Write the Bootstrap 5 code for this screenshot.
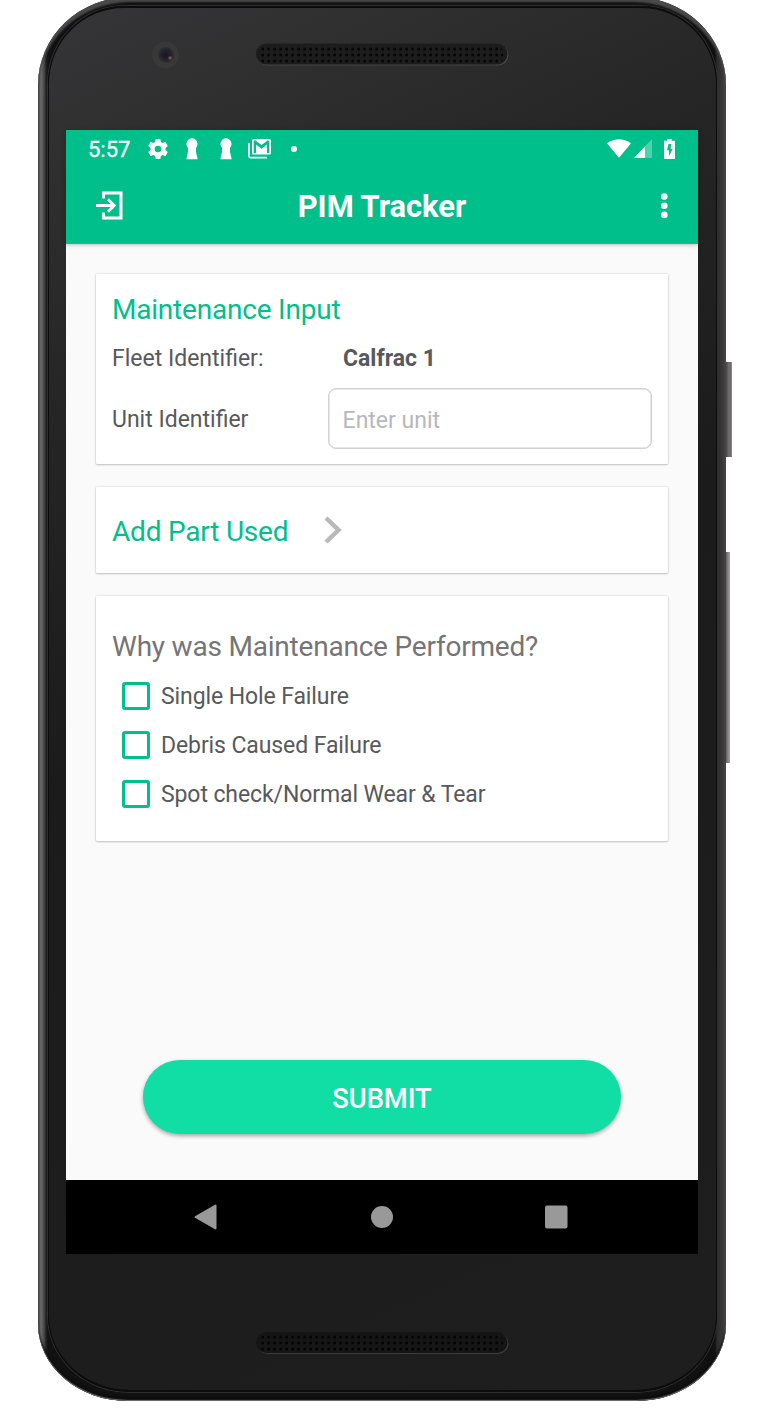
<!DOCTYPE html>
<html lang="en">
<head>
<meta charset="utf-8">
<meta name="viewport" content="width=device-width, initial-scale=1">
<title>PIM Tracker</title>
<link rel="stylesheet" href="https://cdn.jsdelivr.net/npm/bootstrap@5.3.0/dist/css/bootstrap.min.css">
<style>
  body { font-family: Roboto, "Liberation Sans", sans-serif; background: #fff; overflow: hidden; }
  svg { display: block; flex: none; }
  .stage { height: 1424px; display: flow-root; }
  .phone {
    width: 688px; height: 1404px; margin: -3px 0 0 38px; padding: 9px 9px 9px 10px;
    border-radius: 92px 92px 90px 90px / 88px 88px 77px 77px;
    background: linear-gradient(to right, #4d4c4d 0, #6b6a6b 3px, #4a494a 6px, #242324 8px, #121112 10px, #121112 677px, #2b292a 679px, #353233 682px, #3b3839 685px, #555253 688px);
    box-shadow: inset 0 5px 2px #4b4a4b, inset 0 -1px 1px #777, inset 0 -4px 2px #0d0d0d;
  }
  .face {
    height: 1386px; padding: 0 19px 0 18px; border: 2px solid #0c0c0c; border-width: 2px 1px;
    border-radius: 76px 76px 82px 82px / 78px 78px 76px 76px;
    background: linear-gradient(155deg, #353537 0, #303031 130px, #262626 340px, #1b1b1b 700px, #1e1e1e 100%);
    box-shadow: 0 0 0 1px #303031;
  }
  .chin-top { height: 122px; }
  .chin-bottom { height: 138px; padding-top: 77px; }
  .screen { width: 632px; height: 1124px; background: #fafafa; margin-left: -1px; }
  .side-key { left: 726px; background: linear-gradient(to right, #474647, #727272 3px, #666 5px, #aaa); }
  .key-power { top: 362px; width: 6px; height: 95px; }
  .key-volume { top: 552px; width: 4px; height: 211px; background: linear-gradient(to right, #5a595a, #8a8a8a 2px, #999); }
  .top-green { height: 114px; background: #00bf8b; color: #fff; box-shadow: 0 1px 4px rgba(0,0,0,.25); border-bottom: 1px solid #24b48c; }
  .status { height: 38px; padding: 0 23px 0 22px; }
  .clock { font-size: 22px; width: 60px; line-height: 38px; padding-top: 2px; font-weight: 400; -webkit-text-stroke: .3px #fff; }
  .title-bar { height: 75px; padding: 0 29px 0 30px; }
  .title-text { font-size: 30.9px; font-weight: 700; line-height: 75px; padding-top: 2px; margin-right: 20px; }
  .content { height: 936px; padding: 30px 30px 0; }
  .panel { border: 0; border-radius: 1px; background: #fff; box-shadow: 0 0 2px rgba(0,0,0,.22), 0 1px 2px rgba(0,0,0,.18); color: #58595b; font-size: 23px; padding: 0 16px; }
  .panel-input { height: 190px; margin-bottom: 23px; }
  .panel-part { height: 86px; margin-bottom: 23px; }
  .panel-why { height: 245px; padding-top: 32px; }
  .heading { font-size: 28px; letter-spacing: -.21px; line-height: 38px; margin: 0; font-weight: 400; }
  .heading-green { color: #00bf8b; }
  .heading-gray { color: #757575; }
  .label-col { width: 231px; }
  .fleet-row { height: 34px; line-height: 34px; margin-top: 13px; }
  .unit-row { height: 61px; margin-top: 12px; }
  .unit-row label, .check-line label { line-height: 34px; padding-top: 2px; }
  .check-line label { letter-spacing: -.1px; }
  .unit-field { height: 61px; width: 325px; margin-left: -15px; border: 1.5px solid #d1d1d1; box-shadow: inset 0 0 0 .5px #d1d1d1; border-radius: 8px; font-size: 23px; padding: 3px 14px 0; }
  .unit-field::placeholder { color: #b7b7bd; opacity: 1; }
  .check-line { height: 49px; padding-left: 10px; }
  .check-line .form-check-input { width: 28px; height: 28px; margin: 0 11px 0 0; border: 3px solid #00bf8b; border-radius: 3px; background: #fff; flex: none; }
  .submit { width: 478px; height: 74px; margin: 219px auto 0; background: #10dea5; color: #fff; font-size: 27.3px; font-weight: 500; border: 0; border-radius: 37px; padding: 4px 0 0; box-shadow: 0 2px 4px rgba(0,0,0,.35); }
  .nav-keys { height: 74px; background: #000; }
</style>
</head>
<body>
<div class="stage position-relative">
  <div class="phone">
    <div class="face">
      <div class="chin-top position-relative">
        <svg width="630" height="122" viewBox="67 8 630 122">
          <defs>
            <pattern id="holes" x="259" y="46" width="6" height="6" patternUnits="userSpaceOnUse"><circle cx="3.6" cy="3" r="1.5" fill="#050505"/></pattern>
            <radialGradient id="lens"><stop offset="0" stop-color="#17171d"/><stop offset=".6" stop-color="#23222a"/><stop offset="1" stop-color="#303033"/></radialGradient>
          </defs>
          <circle cx="165.500" cy="55" r="13.500" fill="#383839"/>
          <circle cx="166" cy="55" r="8" fill="url(#lens)"/>
          <circle cx="170" cy="58" r="1.700" fill="#75515a"/>
          <rect x="257" y="44.500" width="251.500" height="21" rx="10.500" fill="#454545"/>
          <rect x="256" y="43.500" width="251.500" height="21" rx="10.500" fill="#1c1c1c"/>
          <rect x="260" y="46" width="243" height="18" rx="6" fill="url(#holes)"/>
        </svg>
      </div>

      <div class="screen d-flex flex-column">
        <header class="top-green position-relative flex-shrink-0">
          <div class="status d-flex align-items-center">
            <span class="clock">5:57</span>
            <svg width="20" height="20" viewBox="2 2 20 20" fill="#fff"><path fill-rule="evenodd" d="M19.430 12.980c.04-.32.07-.64.07-.98s-.03-.66-.07-.98l2.110-1.650c.19-.15.240-.42.120-.64l-2-3.460c-.12-.22-.39-.3-.61-.22l-2.490 1c-.52-.4-1.080-.73-1.690-.98l-.38-2.650C14.460 2.180 14.250 2 14 2h-4c-.25 0-.46.180-.49.420l-.38 2.650c-.61.250-1.170.59-1.690.98l-2.490-1c-.23-.09-.49 0-.61.220l-2 3.460c-.13.220-.07.490.120.640l2.110 1.650c-.04.320-.07.650-.07.980s.03.660.07.980l-2.110 1.650c-.19.150-.24.420-.12.640l2 3.460c.12.220.39.300.61.220l2.490-1c.52.400 1.080.730 1.690.980l.38 2.650c.03.240.24.420.49.420h4c.25 0 .46-.18.490-.42l.38-2.650c.61-.25 1.170-.59 1.690-.98l2.490 1c.23.090.49 0 .61-.22l2-3.460c.12-.22.070-.49-.12-.64l-2.110-1.650zM12 15.300a3.300 3.300 0 1 1 0-6.600 3.300 3.300 0 0 1 0 6.600z"/></svg>
            <svg style="margin-left:17px" width="14" height="22" viewBox="0 0 14 22" fill="#fff"><path d="M7 0.300a5.700 5.700 0 0 1 4 9.500V14l1.700 7.300h-11.400l1.700-7.300v-4.200A5.700 5.700 0 0 1 7 .3z"/></svg>
            <svg style="margin-left:20px" width="14" height="22" viewBox="0 0 14 22" fill="#fff"><path d="M7 0.300a5.700 5.700 0 0 1 4 9.500V14l1.700 7.300h-11.400l1.700-7.300v-4.200A5.700 5.700 0 0 1 7 .3z"/></svg>
            <svg style="margin-left:15px" width="24" height="20" viewBox="0 0 24 20"><path d="M.9 4V17Q.9 18.600 2.500 18.600H19" fill="none" stroke="#fff" stroke-width="1.700"/><path fill="#fff" fill-rule="evenodd" d="M5.500 0H21.500A1.500 1.500 0 0 1 23 1.500V14A1.500 1.500 0 0 1 21.500 15.500H5.500A1.500 1.500 0 0 1 4 14V1.500A1.500 1.500 0 0 1 5.500 0zM5.700 2.200V14H8V5.500L13.500 9.700L19 5.500V14H21.300V2.200L19.900 1.300L13.500 6L7.100 1.300z"/></svg>
            <svg style="margin-left:19px" width="6" height="6"><circle cx="3" cy="3" r="3" fill="#fff"/></svg>
            <div class="ms-auto d-flex align-items-center">
              <svg width="24" height="20" viewBox="0 0 24 20"><path fill="#fff" d="M0 4.300Q12-4 24 4.300L12.500 18.300Q12 18.900 11.500 18.300z"/></svg>
              <svg style="margin-left:3px" width="18" height="20" viewBox="0 0 18 20"><path fill="#fff" fill-opacity=".3" d="M18 0V19H0z"/><path fill="#fff" d="M11 7.400V19H0z"/></svg>
              <svg style="margin-left:12px" width="11" height="20" viewBox="0 0 11 20"><path fill="#fff" fill-rule="evenodd" d="M3.300 0H7.700V1.800H11V20H0V1.800H3.300zM7.200 5H4.500L3 11.300H5V17L8.800 9.800H6.500z"/></svg>
            </div>
          </div>
          <div class="title-bar d-flex align-items-center justify-content-between">
            <svg width="28" height="30" viewBox="0 0 28 30" fill="none" stroke="#fff" stroke-width="3"><path d="M7.500 7.500V2H25V27H7.500V21.500M0 14.500H18"/><path d="M12 8.200L18.300 14.500L12 20.800" stroke-width="2.800"/></svg>
            <span class="title-text">PIM Tracker</span>
            <svg width="9" height="26" viewBox="0 0 9 26" fill="#fff"><circle cx="4.300" cy="3.500" r="3.300"/><circle cx="4.300" cy="12.700" r="3.300"/><circle cx="4.300" cy="21.900" r="3.300"/></svg>
          </div>
        </header>

        <main class="content">
          <section class="card panel panel-input">
            <h1 class="heading heading-green" style="margin-top:17px">Maintenance Input</h1>
            <div class="fleet-row d-flex"><span class="label-col">Fleet Identifier:</span><b>Calfrac 1</b></div>
            <div class="unit-row d-flex align-items-center"><label class="label-col" for="unit">Unit Identifier</label><input id="unit" class="form-control unit-field" placeholder="Enter unit"></div>
          </section>
          <section class="card panel panel-part flex-row align-items-center">
            <h2 class="heading heading-green pt-1">Add Part Used</h2>
            <svg style="margin-left:35px" width="20" height="28" viewBox="0 0 20 28"><path d="M3 2L15.500 14L3 26" fill="none" stroke="#b9b9b9" stroke-width="4.500"/></svg>
          </section>
          <section class="card panel panel-why">
            <h2 class="heading heading-gray">Why was Maintenance Performed?</h2>
            <div class="d-flex align-items-center check-line" style="margin-top:5px"><input class="form-check-input" type="checkbox" id="c1"><label for="c1">Single Hole Failure</label></div>
            <div class="d-flex align-items-center check-line"><input class="form-check-input" type="checkbox" id="c2"><label for="c2">Debris Caused Failure</label></div>
            <div class="d-flex align-items-center check-line"><input class="form-check-input" type="checkbox" id="c3"><label for="c3">Spot check/Normal Wear &amp; Tear</label></div>
          </section>
          <button class="btn d-block submit">SUBMIT</button>
        </main>

        <nav class="nav-keys d-flex align-items-center flex-shrink-0">
          <svg style="margin-left:128px" width="23" height="26" viewBox="0 0 23 26"><path d="M21.500 1.500V24.500L1.500 13z" fill="#999" stroke="#999" stroke-width="2" stroke-linejoin="round"/></svg>
          <svg style="margin-left:154px" width="22" height="22"><circle cx="11" cy="11" r="11" fill="#999"/></svg>
          <svg style="margin-left:151px" width="24" height="24"><rect x="1" y=".5" width="22.500" height="23" rx="2" fill="#999"/></svg>
        </nav>
      </div>

      <div class="chin-bottom">
        <svg width="630" height="24" viewBox="67 1331 630 24">
          <defs><pattern id="holes2" x="259" y="1334" width="6" height="6" patternUnits="userSpaceOnUse"><circle cx="3.600" cy="3" r="1.500" fill="#040404"/></pattern></defs>
          <rect x="257" y="1333" width="251.500" height="21" rx="10.500" fill="#3c3c3c"/>
          <rect x="256" y="1332" width="251.500" height="21" rx="10.500" fill="#151515"/>
          <rect x="260" y="1334" width="243" height="18" rx="6" fill="url(#holes2)"/>
        </svg>
      </div>
    </div>
  </div>
  <div class="side-key key-power position-absolute"></div>
  <div class="side-key key-volume position-absolute"></div>
</div>
<script src="https://cdn.jsdelivr.net/npm/bootstrap@5.3.0/dist/js/bootstrap.bundle.min.js"></script>
</body>
</html>
